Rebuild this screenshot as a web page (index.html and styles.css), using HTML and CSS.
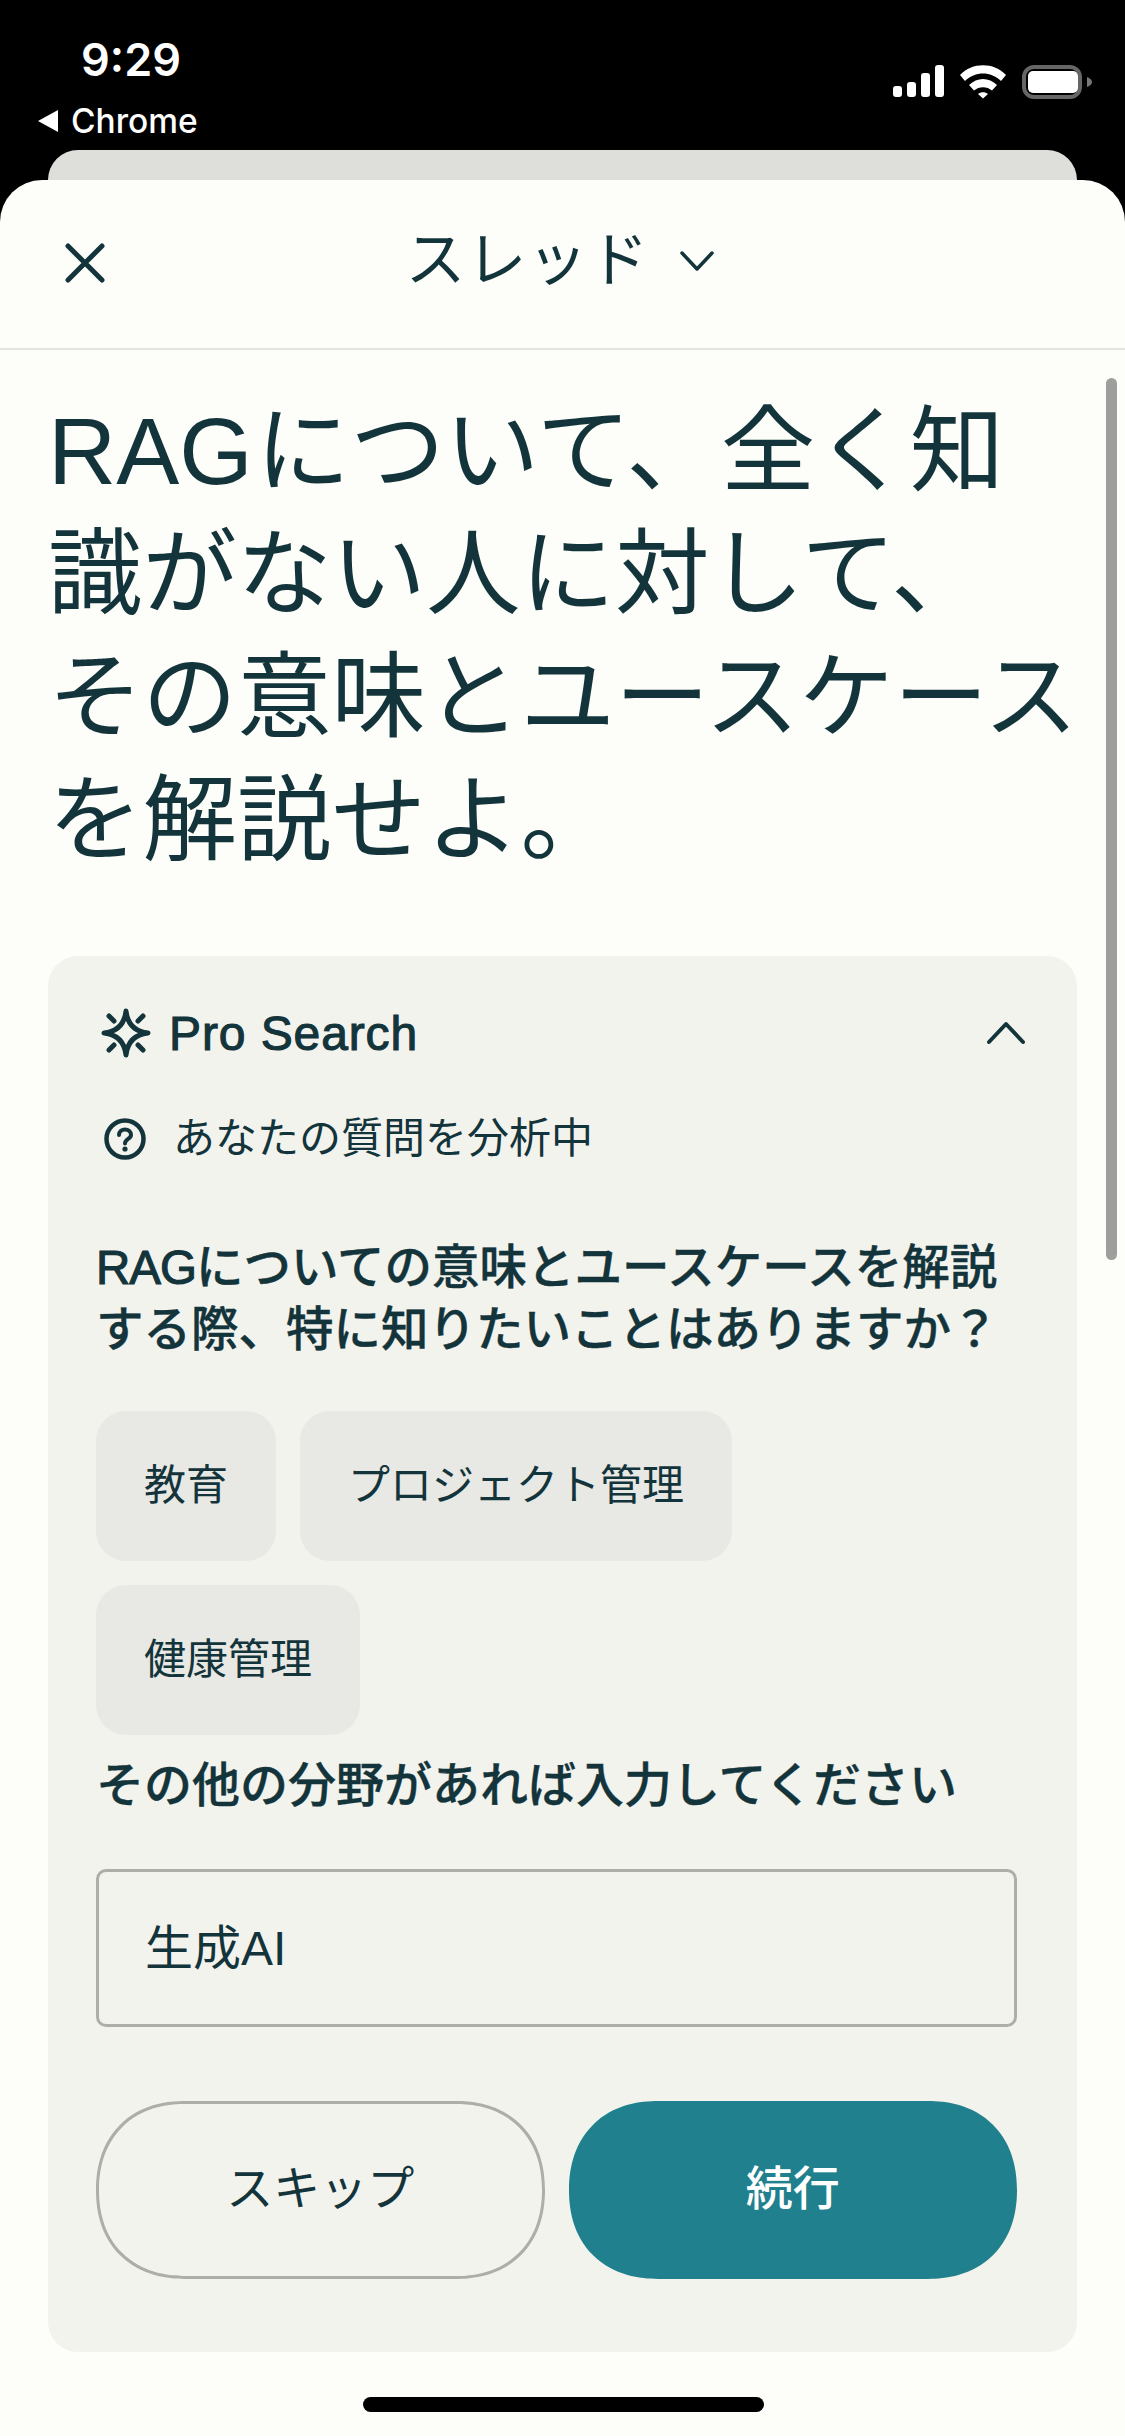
FILE: index.html
```html
<!DOCTYPE html>
<html lang="ja">
<head>
    <meta charset="UTF-8">
    <meta name="viewport" content="width=device-width, initial-scale=1.0">
    <title>スレッド</title>
    <link rel="stylesheet" href="styles.css">
</head>
<body>
    <div class="status-bar">
        <div class="status-left">
            <div class="time">9:29</div>
            <div class="back-app"><span class="back-arrow"></span>Chrome</div>
        </div>
        <div class="status-icons">
            <svg width="52" height="34" viewBox="0 0 52 34"><rect x="0" y="21" width="9" height="11" rx="3" fill="#fff"/><rect x="14" y="17" width="9" height="15" rx="3" fill="#fff"/><rect x="28" y="8" width="9" height="24" rx="3" fill="#fff"/><rect x="42" y="0" width="9" height="32" rx="3" fill="#fff"/></svg>
            <svg width="47" height="34" viewBox="0 0 47 34"><path d="M0 10 C12 -3 34 -3 46 10 L41 16 C31 6 15 6 5 16 Z" fill="#fff"/><path d="M9 20 C17 12 29 12 37 20 L32 25.5 C27 21 19 21 14 25.5 Z" fill="#fff"/><path d="M18 29 C21 26.5 25 26.5 28 29 L23 33.5 Z" fill="#fff"/></svg>
            <svg width="70" height="34" viewBox="0 0 70 34"><rect x="2" y="2" width="56" height="30" rx="10" fill="none" stroke="#666" stroke-width="4"/><rect x="6" y="6" width="50" height="22" rx="5" fill="#fff"/><path d="M65 12 C68 13 70 15 70 17 C70 19 68 21 65 22 Z" fill="#777"/></svg>
        </div>
    </div>
    <div class="back-sheet"></div>

    <div class="sheet">
        <div class="header">
            <svg class="close-icon" width="40" height="40" viewBox="0 0 40 40"><path d="M3 3 L37 37 M37 3 L3 37" stroke="#13343b" stroke-width="5" stroke-linecap="round"/></svg>
            <div class="header-title">スレッド
                <svg width="34" height="20" viewBox="0 0 34 20"><path d="M2 2 L17 18 L32 2" fill="none" stroke="#13343b" stroke-width="3.5" stroke-linecap="round" stroke-linejoin="round"/></svg>
            </div>
        </div>

        <div class="content">
            <h1 class="query"><span class="query-latin">RAG</span>について、全く知<br>識がない人に対して、<br>その意味とユースケース<br>を解説せよ。</h1>

            <div class="card">
                <div class="card-head">
                    <div class="card-title">
                        <svg width="50" height="50" viewBox="0 0 50 50"><path d="M25 3 C26.500 16 33 23.500 47 25 C33 26.500 26.500 34 25 47 C23.500 34 17 26.500 3 25 C17 23.500 23.500 16 25 3 Z" fill="none" stroke="#13343b" stroke-width="5" stroke-linejoin="round"/><path d="M8 8 L13 13 M42 8 L37 13 M8 42 L13 37 M42 42 L37 37" stroke="#13343b" stroke-width="5" stroke-linecap="round"/></svg>
                        <span>Pro Search</span>
                    </div>
                    <svg width="38" height="24" viewBox="0 0 38 24"><path d="M2 21 L19 3 L36 21" fill="none" stroke="#13343b" stroke-width="4" stroke-linecap="round" stroke-linejoin="round"/></svg>
                </div>

                <div class="step">
                    <svg width="42" height="42" viewBox="0 0 42 42"><circle cx="21" cy="21" r="18.500" fill="none" stroke="#13343b" stroke-width="4.500"/><path d="M15 17 C15 9.500 27 9.500 27 17 C27 21 21 21 21 25.500" fill="none" stroke="#13343b" stroke-width="4" stroke-linecap="round"/><circle cx="21" cy="31" r="2.600" fill="#13343b"/></svg>
                    <span>あなたの質問を分析中</span>
                </div>

                <div class="question"><span class="latin">RAG</span>についての意味とユースケースを解説<br>する際、特に知りたいことはありますか？</div>

                <div class="chips">
                    <div class="chip">教育</div>
                    <div class="chip">プロジェクト管理</div>
                    <div class="chip">健康管理</div>
                </div>

                <div class="other-label">その他の分野があれば入力してください</div>
                <div class="text-input">生成AI</div>

                <div class="actions">
                    <button class="btn btn-skip">スキップ</button>
                    <button class="btn btn-continue">続行</button>
                </div>
            </div>
        </div>

        <div class="scrollbar"></div>
        <div class="home-bar"></div>
    </div>
</body>
</html>
```

FILE: styles.css
```css
* {
    box-sizing: border-box;
}
html, body {
    margin: 0;
    padding: 0;
}
body {
    width: 1125px;
    height: 2436px;
    overflow: hidden;
    background-color: #000;
    color: #13343b;
    font-family: "Liberation Sans", "Noto Sans CJK JP", sans-serif;
    position: relative;
}
.status-bar {
    height: 150px;
    padding: 32px 33px 0 36px;
    display: flex;
    justify-content: space-between;
    align-items: flex-start;
    color: #fff;
    font-family: Inter, sans-serif;
}
.time {
    font-size: 45px;
    line-height: 56px;
    font-weight: 600;
    margin-left: 45px;
}
.back-app {
    display: flex;
    align-items: center;
    font-size: 33.5px;
    line-height: 40px;
    font-weight: 500;
    margin-top: 13px;
    margin-left: 2px;
}
.back-arrow {
    width: 0;
    height: 0;
    border-top: 11px solid transparent;
    border-bottom: 11px solid transparent;
    border-right: 20px solid #fff;
    margin-right: 13px;
}
.status-icons {
    display: flex;
    align-items: flex-start;
    gap: 15px;
    margin-top: 33px;
}
.back-sheet {
    height: 60px;
    margin: 0 48px;
    background-color: #dededa;
    border-radius: 30px 30px 0 0;
}
.sheet {
    position: absolute;
    top: 180px;
    left: 0;
    width: 1125px;
    height: 2256px;
    background-color: #fdfef9;
    border-radius: 42px 42px 0 0;
}
.header {
    height: 170px;
    border-bottom: 2px solid #e3e3df;
    display: flex;
    align-items: center;
    justify-content: center;
    position: relative;
}
.close-icon {
    position: absolute;
    left: 65px;
    top: 63px;
}
.header-title {
    display: flex;
    align-items: center;
    gap: 30px;
    font-size: 60px;
    letter-spacing: 1px;
    line-height: 80px;
    margin-top: -6px;
    margin-left: -6px;
}
.content {
    padding: 0 48px;
}
.query {
    margin: 40px 0 0 0;
    font-size: 94.5px;
    line-height: 123px;
    font-weight: 400;
    white-space: nowrap;
}
.query-latin {
    margin-right: 3px;
}
.card {
    margin-top: 74px;
    height: 1396px;
    background-color: #f3f3ee;
    border-radius: 30px;
    padding: 48px 60px 48px 48px;
}
.card-head {
    display: flex;
    justify-content: space-between;
    align-items: center;
    height: 58px;
    margin-right: -8px;
}
.card-title {
    display: flex;
    align-items: center;
    gap: 18px;
    font-size: 48px;
    letter-spacing: 0.9px;
    -webkit-text-stroke: 1.1px #13343b;
    margin-left: 5px;
}
.step {
    display: flex;
    align-items: center;
    gap: 27px;
    margin: 48px 0 0 8px;
    font-size: 42px;
    line-height: 58px;
}
.question {
    margin-top: 69px;
    font-size: 47.5px;
    line-height: 62px;
    font-weight: 500;
    white-space: nowrap;
    -webkit-text-stroke: 0.4px #13343b;
}
.latin {
    letter-spacing: -1px;
    -webkit-text-stroke: 1.1px #13343b;
}
.chips {
    display: flex;
    flex-wrap: wrap;
    gap: 24px;
    margin-top: 50px;
    padding-right: 40px;
}
.chip {
    height: 150px;
    padding: 0 48px 9px 48px;
    display: flex;
    align-items: center;
    background-color: #e8e8e4;
    border-radius: 30px;
    font-size: 42px;
}
.other-label {
    margin-top: 20px;
    font-size: 48px;
    line-height: 62px;
    font-weight: 500;
    -webkit-text-stroke: 0.4px #13343b;
}
.text-input {
    margin-top: 52px;
    height: 158px;
    padding: 0 46px 8px 46px;
    display: flex;
    align-items: center;
    border: 3px solid #adadaa;
    border-radius: 10px;
    font-size: 48px;
}
.actions {
    display: flex;
    gap: 24px;
    margin-top: 74px;
}
.btn {
    flex: 1;
    height: 178px;
    padding: 0 0 11px 0;
    border-radius: 89px;
    corner-shape: superellipse(1.15);
    font-family: inherit;
    font-size: 47px;
}
.btn-skip {
    background-color: transparent;
    border: 3px solid #adadaa;
    color: #13343b;
}
.btn-continue {
    background-color: #20808d;
    border: 3px solid #20808d;
    color: #fff;
    font-weight: 500;
}
.scrollbar {
    position: absolute;
    top: 198px;
    right: 8px;
    width: 11px;
    height: 882px;
    background-color: #9e9e9c;
    border-radius: 6px;
}
.home-bar {
    position: absolute;
    left: 363px;
    bottom: 24px;
    width: 401px;
    height: 15px;
    background-color: #000;
    border-radius: 8px;
}
```
